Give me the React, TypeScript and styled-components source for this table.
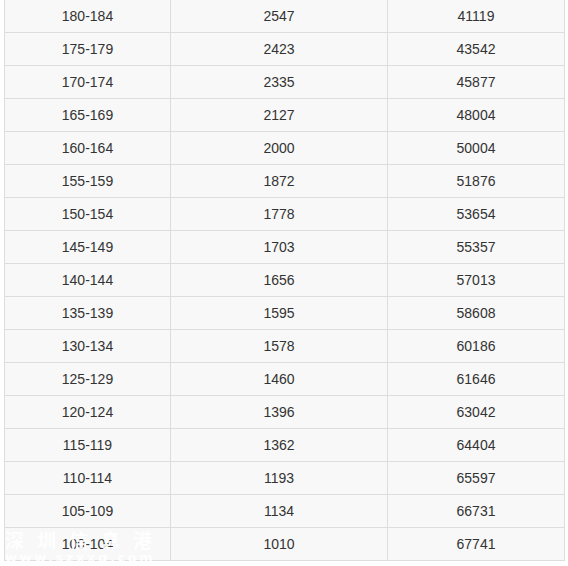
import React from "react";
import styled, { createGlobalStyle } from "styled-components";

const Global = createGlobalStyle`
  html, body { margin: 0; padding: 0; background: #ffffff; }
  body { font-family: "Liberation Sans", Arial, sans-serif; }
`;

const Page = styled.div`
  position: relative;
  width: 568px;
  height: 566px;
  overflow: hidden;
  background: #ffffff;
`;

const Table = styled.table`
  margin: -1px 0 0 4px;
  border-collapse: collapse;
  table-layout: fixed;
  width: 560px;
  background: #f8f8f8;
`;

const Cell = styled.td`
  height: 32px;
  padding: 0;
  border: 1px solid #dddddd;
  text-align: center;
  vertical-align: middle;
  font-family: "Liberation Sans", Arial, sans-serif;
  font-size: 14px;
  color: #333333;
  line-height: 32px;
`;

const Watermark = styled.div`
  position: absolute;
  left: 5px;
  top: 528px;
  color: rgba(255, 255, 255, 0.92);
  pointer-events: none;
  display: flex;
  flex-direction: column;
`;

const WmTitle = styled.div`
  font-family: "Noto Sans CJK SC", sans-serif;
  font-size: 19px;
  font-weight: 700;
  letter-spacing: 13px;
  line-height: 24px;
`;

const WmUrl = styled.div`
  font-family: "DejaVu Sans", sans-serif;
  font-size: 13px;
  font-weight: 700;
  letter-spacing: 2.6px;
  line-height: 14px;
  margin-top: -1px;
`;

const rows: [string, string, string][] = [
  ["180-184", "2547", "41119"],
  ["175-179", "2423", "43542"],
  ["170-174", "2335", "45877"],
  ["165-169", "2127", "48004"],
  ["160-164", "2000", "50004"],
  ["155-159", "1872", "51876"],
  ["150-154", "1778", "53654"],
  ["145-149", "1703", "55357"],
  ["140-144", "1656", "57013"],
  ["135-139", "1595", "58608"],
  ["130-134", "1578", "60186"],
  ["125-129", "1460", "61646"],
  ["120-124", "1396", "63042"],
  ["115-119", "1362", "64404"],
  ["110-114", "1193", "65597"],
  ["105-109", "1134", "66731"],
  ["100-104", "1010", "67741"],
];

export default function App() {
  return (
    <Page>
      <Global />
      <Table>
        <colgroup>
          <col style={{ width: 166 }} />
          <col style={{ width: 217 }} />
          <col style={{ width: 177 }} />
        </colgroup>
        <tbody>
          {rows.map((r) => (
            <tr key={r[0]}>
              <Cell>{r[0]}</Cell>
              <Cell>{r[1]}</Cell>
              <Cell>{r[2]}</Cell>
            </tr>
          ))}
        </tbody>
      </Table>
      <Watermark>
        <WmTitle>深圳信息港</WmTitle>
        <WmUrl>www.szxxg.com</WmUrl>
      </Watermark>
    </Page>
  );
}
